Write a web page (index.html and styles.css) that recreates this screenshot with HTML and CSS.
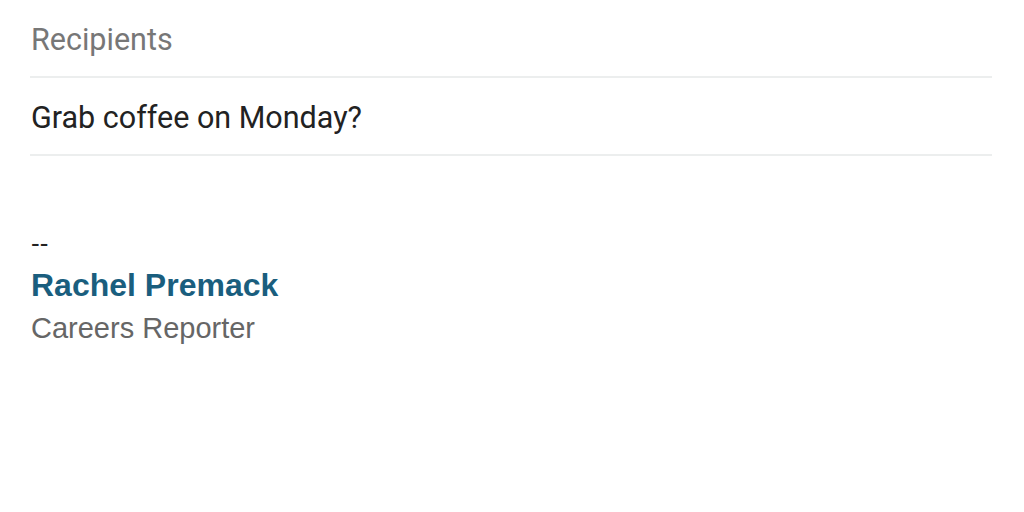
FILE: index.html
```html
<!DOCTYPE html>
<html lang="en">
<head>
    <meta charset="UTF-8">
    <title>Compose</title>
    <link rel="stylesheet" href="styles.css">
</head>
<body>
    <div class="compose">
        <div class="field field-muted">Recipients</div>
        <div class="field">Grab coffee on Monday?</div>

        <!-- Message body with signature -->
        <div class="body">
            <div class="sig-dash">--</div>
            <div class="sig-name">Rachel Premack</div>
            <div class="sig-title">Careers Reporter</div>
        </div>
    </div>
</body>
</html>
```

FILE: styles.css
```css
body {
    margin: 0;
    background-color: #fff;
}

.compose {
    padding: 0 32px 0 30px;
}

.field {
    font-family: Roboto, sans-serif;
    font-size: 30.5px;
    color: #222;
    height: 78px;
    padding-top: 2px;
    line-height: 76px;
    border-bottom: 2px solid #eceeee;
    padding-left: 1px;
    box-sizing: border-box;
}

.field-muted {
    color: #777;
}

.body {
    font-family: "Liberation Sans", Arial, sans-serif;
    padding-top: 67px;
    padding-left: 1px;
}

.sig-dash {
    font-size: 26px;
    color: #222;
    line-height: 40px;
}

.sig-name {
    font-size: 32px;
    font-weight: bold;
    color: #1a5e7e;
    line-height: 44px;
}

.sig-title {
    font-size: 29px;
    color: #666;
    line-height: 42px;
}
```
